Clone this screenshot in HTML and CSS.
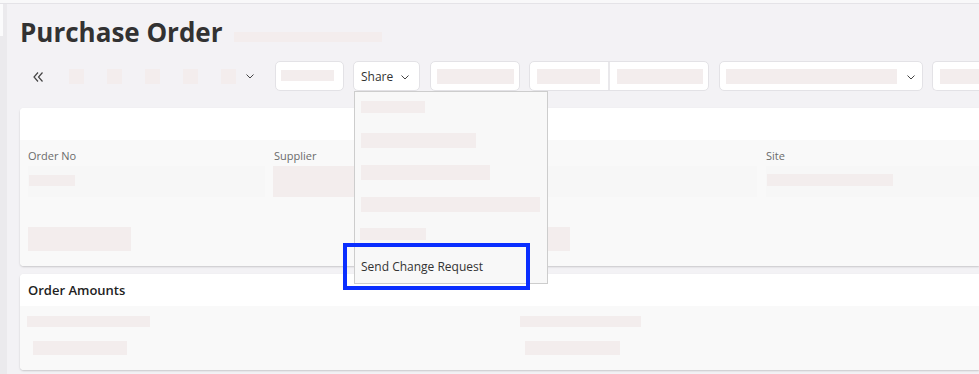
FILE: index.html
```html
<!DOCTYPE html>
<html lang="en">
<head>
<meta charset="utf-8">
<title>Purchase Order</title>
<link rel="stylesheet" href="styles.css">
</head>
<body>
<div class="topline"></div>
<div class="app">
  <div class="rail"><div class="rail-top"></div></div>
  <div class="main">
    <div class="title-row">
      <h1 class="title">Purchase Order</h1>
      <span class="sk sk-title"></span>
    </div>

    <div class="toolbar">
      <span class="ic-dbl">
        <svg width="11" height="10" viewBox="0 0 11 10"><path d="M5 0.5 L1 5 L5 9.5 M9.5 0.5 L5.5 5 L9.5 9.5" fill="none" stroke="#444" stroke-width="1.2"/></svg>
      </span>
      <div class="sq-group">
        <span class="sk sq"></span><span class="sk sq"></span><span class="sk sq"></span><span class="sk sq"></span><span class="sk sq"></span>
      </div>
      <span class="chev tb-chev">
        <svg width="8" height="5" viewBox="0 0 8 5"><path d="M0.5 0.5 L4 4 L7.5 0.5" fill="none" stroke="#444" stroke-width="1"/></svg>
      </span>
      <div class="btn b1"><span class="sk sk-b1"></span></div>
      <div class="share-wrap">
        <div class="btn share">Share
          <svg class="share-chev" width="8" height="5" viewBox="0 0 8 5"><path d="M0.5 0.5 L4 4 L7.5 0.5" fill="none" stroke="#444" stroke-width="1"/></svg>
        </div>
        <div class="menu">
          <div class="menu-item"><span class="sk m1"></span></div>
          <div class="menu-item"><span class="sk m2"></span></div>
          <div class="menu-item"><span class="sk m3"></span></div>
          <div class="menu-item"><span class="sk m4"></span></div>
          <div class="menu-item"><span class="sk m5"></span></div>
          <div class="menu-item menu-text">Send Change Request</div>
        </div>
        <div class="annot"></div>
      </div>
      <div class="btn b3"><span class="sk sk-b3"></span></div>
      <div class="btn b4">
        <div class="b4-part b4-a"><span class="sk sk-b4a"></span></div>
        <div class="b4-part b4-b"><span class="sk sk-b4b"></span></div>
      </div>
      <div class="btn b5"><span class="sk sk-b5"></span>
        <svg class="b5-chev" width="8" height="5" viewBox="0 0 8 5"><path d="M0.5 0.5 L4 4 L7.5 0.5" fill="none" stroke="#444" stroke-width="1"/></svg>
      </div>
      <div class="btn b6"><span class="sk sk-b6"></span></div>
    </div>

    <section class="card card-order">
      <div class="card-head"></div>
      <div class="card-body order-grid">
        <div class="lbl c1">Order No</div>
        <div class="lbl c2">Supplier</div>
        <div class="lbl c4">Site</div>
        <div class="field c1"><span class="sk sk-orderno"></span></div>
        <div class="field c23"><span class="sk sk-supplier"></span></div>
        <div class="field c4"><span class="sk sk-site"></span></div>
        <div class="row3 c1"><span class="sk sk-r3a"></span></div>
        <div class="row3 c3"><span class="sk sk-r3b"></span></div>
      </div>
    </section>

    <section class="card card-amounts">
      <div class="card-head"><h2 class="card-title">Order Amounts</h2></div>
      <div class="card-body amounts-grid">
        <div class="amt-col">
          <span class="sk a1"></span>
          <span class="sk a2"></span>
        </div>
        <div class="amt-col amt-right">
          <span class="sk a3"></span>
          <span class="sk a4"></span>
        </div>
      </div>
    </section>
  </div>
</div>
</body>
</html>
```

FILE: styles.css
```css
html, body {
  margin: 0;
  padding: 0;
  overflow: hidden;
}
body {
  background: #f3f2f5;
  font-family: "Open Sans", "Liberation Sans", sans-serif;
  color: #333;
  width: 979px;
  height: 374px;
}
.topline {
  height: 3px;
  background: #f8f8f9;
  border-bottom: 1px solid #e4e3e7;
}
.app {
  display: flex;
  height: 370px;
}
.rail {
  width: 7px;
  flex: 0 0 7px;
  background: #ebeaed;
}
.rail-top {
  width: 3px;
  height: 32px;
  background: #fbfbfc;
}
.main {
  flex: 1;
  padding-left: 13px;
  min-width: 0;
  overflow: hidden;
}
.sk {
  display: block;
  background: #f3eded;
  flex-shrink: 0;
}

/* title */
.title-row {
  display: flex;
  align-items: flex-end;
  margin-top: 10px;
  height: 36px;
}
.title {
  margin: 0;
  font-size: 26px;
  line-height: 36px;
  font-weight: 700;
  color: #323232;
}
.sk-title {
  width: 148px;
  height: 10px;
  margin-left: 11px;
  margin-bottom: 8px;
}

/* toolbar */
.toolbar {
  display: flex;
  align-items: center;
  height: 30px;
  margin-top: 11px;
}
.ic-dbl {
  display: flex;
  margin-left: 13px;
  width: 11px;
  margin-top: 2px;
}
.sq-group {
  display: flex;
  gap: 23px;
  margin-left: 25px;
}
.sq {
  width: 15px;
  height: 15px;
}
.tb-chev {
  display: flex;
  margin-left: 10px;
  margin-top: 1px;
}
.btn {
  box-sizing: border-box;
  height: 30px;
  background: #fff;
  border: 1px solid #e3e2e6;
  border-radius: 5px;
  display: flex;
  align-items: center;
  flex-shrink: 0;
}
.b1 {
  width: 69px;
  margin-left: 21px;
}
.sk-b1 {
  width: 53px;
  height: 11px;
  margin-left: 5px;
  margin-top: -1px;
}
.share-wrap {
  position: relative;
  margin-left: 9px;
  flex-shrink: 0;
}
.share {
  width: 67px;
  font-size: 12px;
  padding-left: 7px;
  color: #333;
}
.share-chev {
  margin-left: 8px;
  margin-top: 2px;
}
.b3 {
  width: 90px;
  margin-left: 10px;
}
.sk-b3 {
  width: 77px;
  height: 15px;
  margin-left: 6px;
}
.b4 {
  width: 180px;
  margin-left: 9px;
  align-items: stretch;
}
.b4-part {
  display: flex;
  align-items: center;
}
.b4-a {
  width: 78px;
  border-right: 2px solid #e9e8eb;
}
.sk-b4a {
  width: 63px;
  height: 15px;
  margin-left: 7px;
}
.sk-b4b {
  width: 86px;
  height: 15px;
  margin-left: 7px;
}
.b5 {
  width: 204px;
  margin-left: 10px;
}
.sk-b5 {
  width: 171px;
  height: 15px;
  margin-left: 6px;
}
.b5-chev {
  margin-left: 10px;
  margin-top: 2px;
}
.b6 {
  flex: 1;
  min-width: 0;
  margin-left: 9px;
  border-right: none;
  border-radius: 5px 0 0 5px;
  overflow: hidden;
}
.sk-b6 {
  width: 80px;
  height: 15px;
  margin-left: 7px;
}

/* dropdown menu (overlay) */
.menu {
  position: absolute;
  left: 1px;
  top: 30px;
  width: 194px;
  height: 193px;
  box-sizing: border-box;
  background: #f8f8f8;
  border: 1px solid #cdcdcd;
  z-index: 10;
  display: flex;
  flex-direction: column;
}
.menu-item {
  height: 32px;
  display: flex;
  align-items: center;
  padding-left: 6px;
  flex-shrink: 0;
}
.m1 { width: 64px; height: 12px; margin-top: -2px; }
.m2 { width: 115px; height: 15px; }
.m3 { width: 129px; height: 15px; }
.m4 { width: 179px; height: 15px; }
.m5 { width: 66px; height: 12px; margin-left: -1px; margin-top: -4px; }
.menu-text {
  font-size: 12px;
  color: #333;
  margin-top: -2px;
}
.annot {
  position: absolute;
  left: -10px;
  top: 182px;
  width: 187px;
  height: 47px;
  box-sizing: border-box;
  border: 4px solid #0a2eff;
  z-index: 11;
}

/* cards */
.card {
  background: #fff;
  border-radius: 4px 0 0 4px;
  box-shadow: 0 1px 2px rgba(0, 0, 0, 0.18);
  overflow: hidden;
}
.card-order {
  margin-top: 17px;
}
.card-amounts {
  margin-top: 8px;
}
.card-head {
  height: 32px;
  background: #fff;
  display: flex;
  align-items: center;
  padding-left: 8px;
}
.card-title {
  margin: 0;
  font-size: 13px;
  font-weight: 600;
  color: #222;
  line-height: 16px;
}
.card-body {
  background: #f9f9f9;
}
.order-grid {
  display: grid;
  grid-template-columns: repeat(4, 237px);
  grid-template-rows: 18px 61px 24px;
  column-gap: 9px;
  padding: 8px 0 15px 8px;
}
.lbl {
  grid-row: 1;
  font-size: 11px;
  line-height: 15px;
  color: #6b6b6b;
}
.field {
  grid-row: 2;
  height: 31px;
  background: #f7f7f7;
  display: flex;
  align-items: center;
}
.row3 {
  grid-row: 3;
  display: flex;
}
.c1 { grid-column: 1; }
.c2 { grid-column: 2; }
.c3 { grid-column: 3; }
.c4 { grid-column: 4; }
.c23 { grid-column: 2 / span 2; align-items: stretch; }
.sk-orderno { width: 46px; height: 11px; margin-left: 1px; margin-top: -2px; }
.sk-supplier { width: 240px; margin-left: -1px; }
.sk-site { width: 126px; height: 12px; margin-left: 1px; margin-top: -3px; }
.sk-r3a { width: 103px; height: 24px; }
.sk-r3b { width: 50px; height: 24px; }

.amounts-grid {
  display: grid;
  grid-template-columns: 493px 1fr;
  padding: 10px 0 15px 7px;
}
.amt-col {
  display: flex;
  flex-direction: column;
  gap: 14px;
}
.a1 { width: 123px; height: 11px; }
.a2 { width: 94px; height: 14px; margin-left: 6px; }
.a3 { width: 121px; height: 11px; }
.a4 { width: 95px; height: 14px; margin-left: 5px; }
```
